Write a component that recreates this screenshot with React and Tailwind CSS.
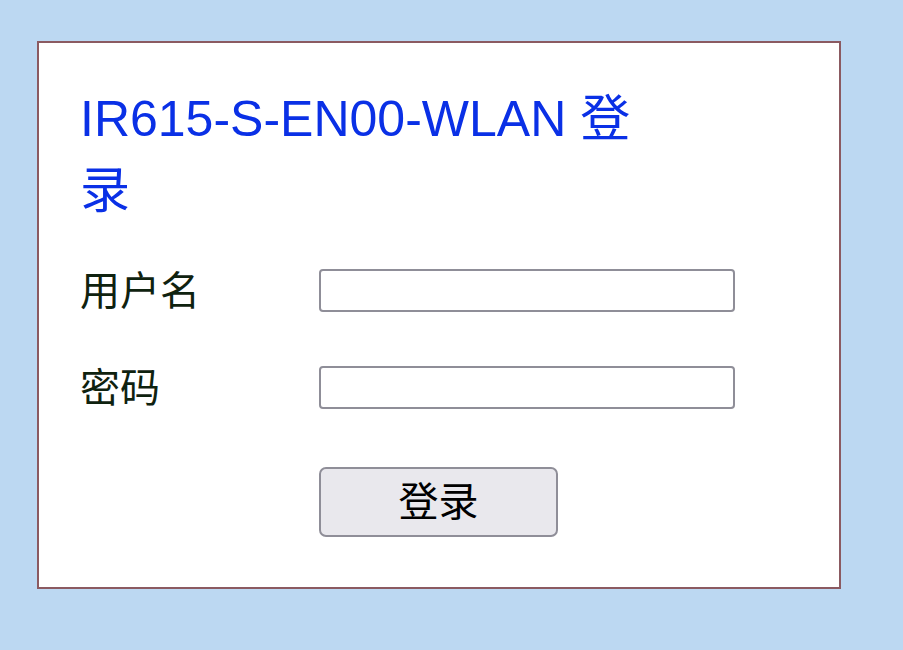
export default function App() {
  const font = { fontFamily: '"Liberation Sans", "Noto Sans CJK SC", sans-serif' };
  return (
    <div className="min-h-[650px] w-full bg-[#bcd8f2] pl-[37px] pt-[41px]" style={font}>
      <div className="w-[804px] h-[548px] border-2 border-[#8b5a61] bg-white pl-[41px] pt-[40px]">
        <h1 className="w-[580px] text-[50px] leading-[72px] font-normal text-[#0a30e6]">
          IR615-S-EN00-WLAN 登录
        </h1>
        <form className="mt-[42px]" onSubmit={(e) => e.preventDefault()}>
          <div className="flex items-center h-[43px]">
            <label className="w-[239px] text-[40px] leading-none text-[#0f220f]">用户名</label>
            <input className="w-[416px] h-[43px] rounded-[4px] border-2 border-[#8f8e98] bg-white outline-none" />
          </div>
          <div className="flex items-center h-[43px] mt-[54px]">
            <label className="w-[239px] text-[40px] leading-none text-[#0f220f]">密码</label>
            <input type="password" className="w-[416px] h-[43px] rounded-[4px] border-2 border-[#8f8e98] bg-white outline-none" />
          </div>
          <div className="flex mt-[58px] pl-[239px]">
            <button type="submit" className="w-[239px] h-[70px] rounded-[7px] border-2 border-[#8f8e98] bg-[#e9e8ed] text-[40px] leading-none text-black">
              登录
            </button>
          </div>
        </form>
      </div>
    </div>
  );
}
